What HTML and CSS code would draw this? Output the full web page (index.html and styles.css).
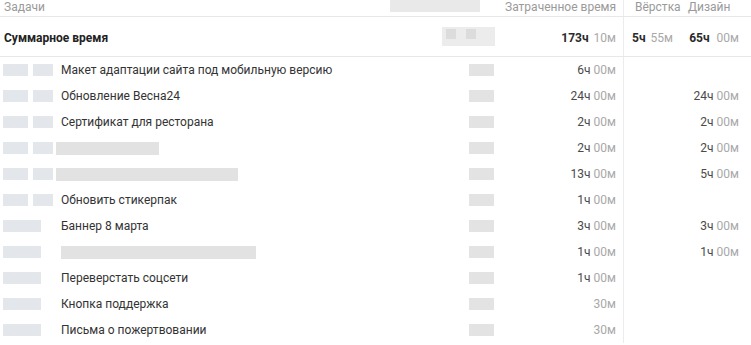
FILE: index.html
```html
<!DOCTYPE html>
<html lang="ru">
<head>
<meta charset="utf-8">
<link rel="stylesheet" href="styles.css">
</head>
<body>
<div class="table">
  <div class="row head">
    <div class="c-name">Задачи</div>
    <div class="c-blur"><span class="blur b-head"></span></div>
    <div class="c-time">Затраченное время</div>
    <div class="c-v">Вёрстка</div>
    <div class="c-d">Дизайн</div>
  </div>
  <div class="row sum">
    <div class="c-name">Суммарное время</div>
    <div class="c-blur"><span class="blur b-sum"><i></i><i></i></span></div>
    <div class="c-time"><b>173ч</b> <em>10м</em></div>
    <div class="c-v"><b>5ч</b> <em>55м</em></div>
    <div class="c-d"><b>65ч</b> <em>00м</em></div>
  </div>

  <div class="row item">
    <div class="c-name"><span class="av"><i></i><i></i></span><span class="t">Макет адаптации сайта под мобильную версию</span></div>
    <div class="c-blur"><span class="blur b-sm"></span></div>
    <div class="c-time">6ч <em>00м</em></div>
    <div class="c-v"></div>
    <div class="c-d"></div>
  </div>
  <div class="row item">
    <div class="c-name"><span class="av"><i></i><i></i></span><span class="t">Обновление Весна24</span></div>
    <div class="c-blur"><span class="blur b-sm"></span></div>
    <div class="c-time">24ч <em>00м</em></div>
    <div class="c-v"></div>
    <div class="c-d">24ч <em>00м</em></div>
  </div>
  <div class="row item">
    <div class="c-name"><span class="av"><i></i><i></i></span><span class="t">Сертификат для ресторана</span></div>
    <div class="c-blur"><span class="blur b-sm"></span></div>
    <div class="c-time">2ч <em>00м</em></div>
    <div class="c-v"></div>
    <div class="c-d">2ч <em>00м</em></div>
  </div>
  <div class="row item">
    <div class="c-name"><span class="av"><i></i><i></i></span><span class="blur n-blur" style="width:103px"></span></div>
    <div class="c-blur"><span class="blur b-sm"></span></div>
    <div class="c-time">2ч <em>00м</em></div>
    <div class="c-v"></div>
    <div class="c-d">2ч <em>00м</em></div>
  </div>
  <div class="row item">
    <div class="c-name"><span class="av"><i></i><i></i></span><span class="blur n-blur" style="width:182px"></span></div>
    <div class="c-blur"><span class="blur b-sm"></span></div>
    <div class="c-time">13ч <em>00м</em></div>
    <div class="c-v"></div>
    <div class="c-d">5ч <em>00м</em></div>
  </div>
  <div class="row item">
    <div class="c-name"><span class="av"><i></i><i></i></span><span class="t">Обновить стикерпак</span></div>
    <div class="c-blur"><span class="blur b-sm"></span></div>
    <div class="c-time">1ч <em>00м</em></div>
    <div class="c-v"></div>
    <div class="c-d"></div>
  </div>
  <div class="row item">
    <div class="c-name"><span class="av one"><i></i></span><span class="t">Баннер 8 марта</span></div>
    <div class="c-blur"><span class="blur b-sm"></span></div>
    <div class="c-time">3ч <em>00м</em></div>
    <div class="c-v"></div>
    <div class="c-d">3ч <em>00м</em></div>
  </div>
  <div class="row item">
    <div class="c-name"><span class="av one"><i></i></span><span class="blur n-blur wide" style="width:195px"></span></div>
    <div class="c-blur"><span class="blur b-sm"></span></div>
    <div class="c-time">1ч <em>00м</em></div>
    <div class="c-v"></div>
    <div class="c-d">1ч <em>00м</em></div>
  </div>
  <div class="row item">
    <div class="c-name"><span class="av one"><i></i></span><span class="t">Переверстать соцсети</span></div>
    <div class="c-blur"><span class="blur b-sm"></span></div>
    <div class="c-time">1ч <em>00м</em></div>
    <div class="c-v"></div>
    <div class="c-d"></div>
  </div>
  <div class="row item">
    <div class="c-name"><span class="av one"><i></i></span><span class="t">Кнопка поддержка</span></div>
    <div class="c-blur"><span class="blur b-sm"></span></div>
    <div class="c-time"><em>30м</em></div>
    <div class="c-v"></div>
    <div class="c-d"></div>
  </div>
  <div class="row item">
    <div class="c-name"><span class="av one"><i></i></span><span class="t">Письма о пожертвовании</span></div>
    <div class="c-blur"><span class="blur b-sm"></span></div>
    <div class="c-time"><em>30м</em></div>
    <div class="c-v"></div>
    <div class="c-d"></div>
  </div>
</div>
</body>
</html>
```
FILE: styles.css
```css
* { box-sizing: border-box; }
html, body { margin: 0; padding: 0; background: #fff; }
body {
  font-family: Roboto, "Noto Sans", sans-serif;
  font-size: 12px;
  color: #3a3a3a;
  width: 751px;
  height: 345px;
  overflow: hidden;
}
.table { display: flex; flex-direction: column; }
.row {
  display: grid;
  grid-template-columns: 440px 60px 123px 57px 71px;
  align-items: center;
  white-space: nowrap;
}
.row > div { height: 100%; display: flex; align-items: center; }
.c-time { justify-content: flex-end; padding-right: 7px; }
.c-v { justify-content: flex-end; padding-right: 4px; border-left: 1px solid #ececec; }
.c-d { justify-content: flex-end; padding-right: 12px; }
.head { height: 17px; border-bottom: 1px solid #e8e8e8; color: #9a9a9a; font-size: 12px; }
.head .c-name { padding-left: 4px; }
.head .c-time { padding-right: 7px; }
.head .c-v { justify-content: flex-start; padding-left: 11px; }
.head .c-d { justify-content: flex-start; padding-left: 8px; }
.head > div { align-items: flex-end; padding-bottom: 2px; }
.sum { height: 40px; border-bottom: 1px solid #e8e8e8; }
.sum > div { padding-top: 3px; }
.sum .c-blur { padding-top: 0; }
.sum .c-name { padding-left: 4px; font-weight: 700; color: #222; }
.sum b { font-weight: 700; color: #2a2a2a; margin-right: 5px; }
.sum .c-v { padding-right: 7px; }
.sum .c-d { padding-right: 12px; }
.sum .c-d b { margin-right: 7px; }
.c-time em, .c-v em, .c-d em { font-style: normal; color: #a8a8a8; }
.item { height: 26px; }
.item .c-time, .item .c-d { color: #4a4a4a; }
.item .c-time em, .item .c-d em { margin-left: 3px; }
.item .c-name { padding-left: 3px; }
.t { margin-left: 8px; color: #333; }
.blur { display: inline-block; background: #e6e6e6; filter: blur(0.6px); }
.b-head { width: 90px; height: 12px; margin-left: -50px; background: #e9e9e9; }
.head .c-blur { align-items: flex-start; }
.b-sum { width: 53px; height: 19px; display: flex; gap: 10px; padding: 2px 4px; background: #ececec; margin-left: 2px; }
.b-sum i { display: block; width: 10px; height: 10px; background: #dcdcdc; }
.b-sm { width: 25px; height: 12px; margin-left: 29px; background: #e3e3e3; }
.av { display: flex; gap: 5px; width: 50px; }
.av i { display: block; height: 12px; background: #e3e6eb; filter: blur(0.6px); }
.av i:first-child { width: 25px; }
.av i:nth-child(2) { width: 20px; }
.av.one i { width: 38px; }
.n-blur { height: 13px; margin-left: 3px; background: #e2e2e2; }
.n-blur.wide { margin-left: 8px; }
```
